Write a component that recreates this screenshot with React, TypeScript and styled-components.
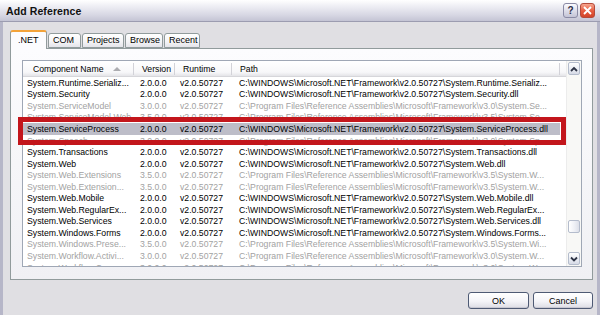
import styled, { createGlobalStyle } from 'styled-components'

const GlobalStyle = createGlobalStyle`
  html, body {
    margin: 0;
    padding: 0;
    overflow: hidden;
  }
  body {
    font-family: "Liberation Sans", Arial, sans-serif;
  }
`

const WIN = 'C:\\WINDOWS\\Microsoft.NET\\Framework\\v2.0.50727\\'
const REF = 'C:\\Program Files\\Reference Assemblies\\Microsoft\\Framework\\'

const rows = [
  { name: 'System.Runtime.Serializ...', version: '2.0.0.0', path: WIN + 'System.Runtime.Serializ...' },
  { name: 'System.Security', version: '2.0.0.0', path: WIN + 'System.Security.dll' },
  { name: 'System.ServiceModel', version: '3.0.0.0', path: REF + 'v3.0\\System.Se...', dim: true },
  { name: 'System.ServiceModel.Web', version: '3.5.0.0', path: REF + 'v3.5\\System.Se...', dim: true },
  { name: 'System.ServiceProcess', version: '2.0.0.0', path: WIN + 'System.ServiceProcess.dll', selected: true },
  { name: 'System.Speech', version: '3.0.0.0', path: REF + 'v3.0\\System.Sp...', dim: true },
  { name: 'System.Transactions', version: '2.0.0.0', path: WIN + 'System.Transactions.dll' },
  { name: 'System.Web', version: '2.0.0.0', path: WIN + 'System.Web.dll' },
  { name: 'System.Web.Extensions', version: '3.5.0.0', path: REF + 'v3.5\\System.W...', dim: true },
  { name: 'System.Web.Extension...', version: '3.5.0.0', path: REF + 'v3.5\\System.W...', dim: true },
  { name: 'System.Web.Mobile', version: '2.0.0.0', path: WIN + 'System.Web.Mobile.dll' },
  { name: 'System.Web.RegularEx...', version: '2.0.0.0', path: WIN + 'System.Web.RegularEx...' },
  { name: 'System.Web.Services', version: '2.0.0.0', path: WIN + 'System.Web.Services.dll' },
  { name: 'System.Windows.Forms', version: '2.0.0.0', path: WIN + 'System.Windows.Forms...' },
  { name: 'System.Windows.Prese...', version: '3.5.0.0', path: REF + 'v3.5\\System.Wi...', dim: true },
  { name: 'System.Workflow.Activi...', version: '3.0.0.0', path: REF + 'v3.0\\System.W...', dim: true },
  { name: 'System.Workflow.Com...', version: '3.0.0.0', path: REF + 'v3.0\\System.W...', dim: true },
]

const columns = [
  { title: 'Component Name', w: 111, pad: 10, cellPad: 4, sorted: true },
  { title: 'Version', w: 41, pad: 8, cellPad: 6 },
  { title: 'Runtime', w: 57, pad: 8, cellPad: 5 },
  { title: 'Path', w: 328, pad: 8, cellPad: 7 },
]

const tabs = [
  { label: '.NET', w: 37, active: true },
  { label: 'COM', w: 33 },
  { label: 'Projects', w: 42 },
  { label: 'Browse', w: 38 },
  { label: 'Recent', w: 36 },
]

const Window = styled.div`
  width: 600px;
  height: 315px;
  display: flex;
  flex-direction: column;
  background: #e0dfe3;
  box-sizing: border-box;
`

const TitleBar = styled.div`
  height: 21px;
  flex: none;
  display: flex;
  align-items: center;
  padding: 0 5px 0 6px;
  background: linear-gradient(to bottom, #ffffff 0%, #eeeef4 30%, #d8d8e4 70%, #c4c4d4 100%);
  border-bottom: 1px solid #9c9cb0;
`

const Title = styled.div`
  flex: 1;
  font-size: 10.5px;
  font-weight: bold;
  color: #111;
  letter-spacing: 0.1px;
`

const CaptionButton = styled.div<{ $close?: boolean }>`
  width: 15px;
  height: 15px;
  margin-left: 2px;
  box-sizing: border-box;
  border-radius: 3px;
  display: flex;
  align-items: center;
  justify-content: center;
  border: 1px solid ${p => (p.$close ? '#b44a3a' : '#8a8aa4')};
  background: ${p =>
    p.$close
      ? 'linear-gradient(to bottom, #f6a58e, #e65a3e 55%, #d2452a)'
      : 'linear-gradient(to bottom, #fbfbff, #dcdce8 55%, #c4c4d6)'};
  color: #2c2c44;
  font-size: 10px;
  font-weight: bold;
`

const Body = styled.div`
  flex: 1;
  display: flex;
  flex-direction: column;
  padding: 8px 4px 6px 7px;
  border-left: 3px solid #b6b6c8;
  border-right: 3px solid #b6b6c8;
  min-height: 0;
`

const TabStrip = styled.div`
  height: 18px;
  flex: none;
  display: flex;
  align-items: flex-end;
  position: relative;
  z-index: 1;
`

const Tab = styled.div<{ $active?: boolean }>`
  box-sizing: border-box;
  height: ${p => (p.$active ? '19px' : '15px')};
  margin-bottom: ${p => (p.$active ? '-1px' : '0')};
  margin-right: 1px;
  padding: ${p => (p.$active ? '3px 0 0 7px' : '1px 0 0 4px')};
  font-size: 9px;
  color: #000;
  border: 1px solid #919b9c;
  border-bottom: ${p => (p.$active ? 'none' : '1px solid #919b9c')};
  border-top: ${p => (p.$active ? '2px solid #f3a33a' : '1px solid #919b9c')};
  border-radius: 3px 3px 0 0;
  background: ${p =>
    p.$active ? '#fcfcfe' : 'linear-gradient(to bottom, #ffffff, #f4f4f6 60%, #e4e4ea)'};
`

const Panel = styled.div`
  flex: 1;
  display: flex;
  min-height: 0;
  padding: 11px 10px 12px 11px;
  border: 1px solid #919b9c;
  background: linear-gradient(to bottom, #fcfcfe, #f0f0f4);
`

const ListView = styled.div`
  flex: 1;
  display: flex;
  position: relative;
  min-width: 0;
  border: 1px solid #9fa7b5;
  background: #fff;
`

const Grid = styled.div`
  flex: 1;
  overflow: hidden;
  min-width: 0;
`

const Header = styled.div`
  height: 16px;
  display: flex;
  box-sizing: border-box;
  border-bottom: 1px solid #d6d6da;
  background: linear-gradient(to bottom, #ffffff, #f7f7f9 75%, #e4e4e8);
`

const HeaderCell = styled.div<{ $w: number; $pad: number }>`
  width: ${p => p.$w}px;
  flex: none;
  box-sizing: border-box;
  padding-left: ${p => p.$pad}px;
  display: flex;
  align-items: center;
  font-size: 8.7px;
  color: #000;
  position: relative;
  white-space: nowrap;

  &::after {
    content: '';
    position: absolute;
    right: 0;
    top: 2px;
    bottom: 1px;
    width: 1px;
    background: #d2d2d8;
  }
`

const SortArrow = styled.span`
  margin-left: 9px;
  width: 0;
  height: 0;
  border-left: 4px solid transparent;
  border-right: 4px solid transparent;
  border-bottom: 4px solid #acacb0;
`

const Row = styled.div<{ $dim?: boolean; $selected?: boolean }>`
  height: 11.55px;
  width: 537px;
  display: flex;
  align-items: center;
  color: ${p => (p.$dim ? '#a2a2a2' : '#000')};
  background: ${p => (p.$selected ? '#bdbdc8' : 'transparent')};
`

const Cell = styled.div<{ $w: number; $pad: number }>`
  width: ${p => p.$w}px;
  flex: none;
  box-sizing: border-box;
  padding-left: ${p => p.$pad}px;
  font-size: 8.7px;
  white-space: nowrap;
  overflow: hidden;
`

const ScrollBar = styled.div`
  width: 15px;
  flex: none;
  display: flex;
  flex-direction: column;
  box-sizing: border-box;
  padding: 1px;
  background: #f8f8f6;
  border-left: 1px solid #ececec;
`

const ScrollButton = styled.div`
  height: 13px;
  flex: none;
  box-sizing: border-box;
  border: 1px solid #b4bccc;
  border-radius: 2px;
  display: flex;
  align-items: center;
  justify-content: center;
  background: linear-gradient(to bottom, #ffffff, #e8ebf2 60%, #d6dae6);
`

const Track = styled.div`
  flex: 1;
  display: flex;
  flex-direction: column;
`

const Thumb = styled.div<{ $top: number }>`
  margin-top: ${p => p.$top}px;
  height: 13px;
  box-sizing: border-box;
  border: 1px solid #b4bccc;
  border-radius: 2px;
  background: linear-gradient(to right, #ffffff, #eceef4 60%, #dcdfe8);
`

const Highlight = styled.div`
  position: absolute;
  left: -5px;
  top: 56px;
  width: 548px;
  height: 28px;
  box-sizing: border-box;
  border: 5px solid #c3161c;
  pointer-events: none;
`

const Footer = styled.div`
  height: 17px;
  flex: none;
  margin-top: 12px;
  display: flex;
  justify-content: flex-end;
  gap: 4px;
`

const Button = styled.div<{ $w: number }>`
  width: ${p => p.$w}px;
  height: 17px;
  box-sizing: border-box;
  border: 1px solid #4e5a74;
  border-radius: 3px;
  display: flex;
  align-items: center;
  justify-content: center;
  font-size: 9px;
  color: #000;
  background: linear-gradient(to bottom, #ffffff, #f4f4f8 55%, #dcdce4);
  box-shadow: inset 0 -1px 0 #c8c8d2;
`

const Chevron = ({ up }: { up?: boolean }) => (
  <svg width="8" height="6" viewBox="0 0 8 6">
    <polyline
      points={up ? '1,5 4,2 7,5' : '1,1.5 4,4.5 7,1.5'}
      fill="none"
      stroke="#2e3446"
      strokeWidth="1.8"
    />
  </svg>
)

const App = () => {
  return (
    <>
      <GlobalStyle />
      <Window>
        <TitleBar>
          <Title>Add Reference</Title>
          <CaptionButton>?</CaptionButton>
          <CaptionButton $close>
            <svg width="9" height="9" viewBox="0 0 9 9">
              <path d="M1 1 L8 8 M8 1 L1 8" stroke="#fff" strokeWidth="1.8" />
            </svg>
          </CaptionButton>
        </TitleBar>
        <Body>
          <TabStrip>
            {tabs.map(t => (
              <Tab key={t.label} $active={t.active} style={{ width: t.w }}>
                {t.label}
              </Tab>
            ))}
          </TabStrip>
          <Panel>
            <ListView>
              <Grid>
                <Header>
                  {columns.map(c => (
                    <HeaderCell key={c.title} $w={c.w} $pad={c.pad}>
                      {c.title}
                      {c.sorted && <SortArrow />}
                    </HeaderCell>
                  ))}
                </Header>
                {rows.map(r => (
                  <Row key={r.name + r.path} $dim={r.dim} $selected={r.selected}>
                    <Cell $w={columns[0].w} $pad={columns[0].cellPad}>{r.name}</Cell>
                    <Cell $w={columns[1].w} $pad={columns[1].cellPad}>{r.version}</Cell>
                    <Cell $w={columns[2].w} $pad={columns[2].cellPad}>v2.0.50727</Cell>
                    <Cell $w={columns[3].w} $pad={columns[3].cellPad}>{r.path}</Cell>
                  </Row>
                ))}
              </Grid>
              <ScrollBar>
                <ScrollButton><Chevron up /></ScrollButton>
                <Track>
                  <Thumb $top={145} />
                </Track>
                <ScrollButton><Chevron /></ScrollButton>
              </ScrollBar>
              <Highlight />
            </ListView>
          </Panel>
          <Footer>
            <Button $w={61}>OK</Button>
            <Button $w={60}>Cancel</Button>
          </Footer>
        </Body>
      </Window>
    </>
  )
}

export default App
